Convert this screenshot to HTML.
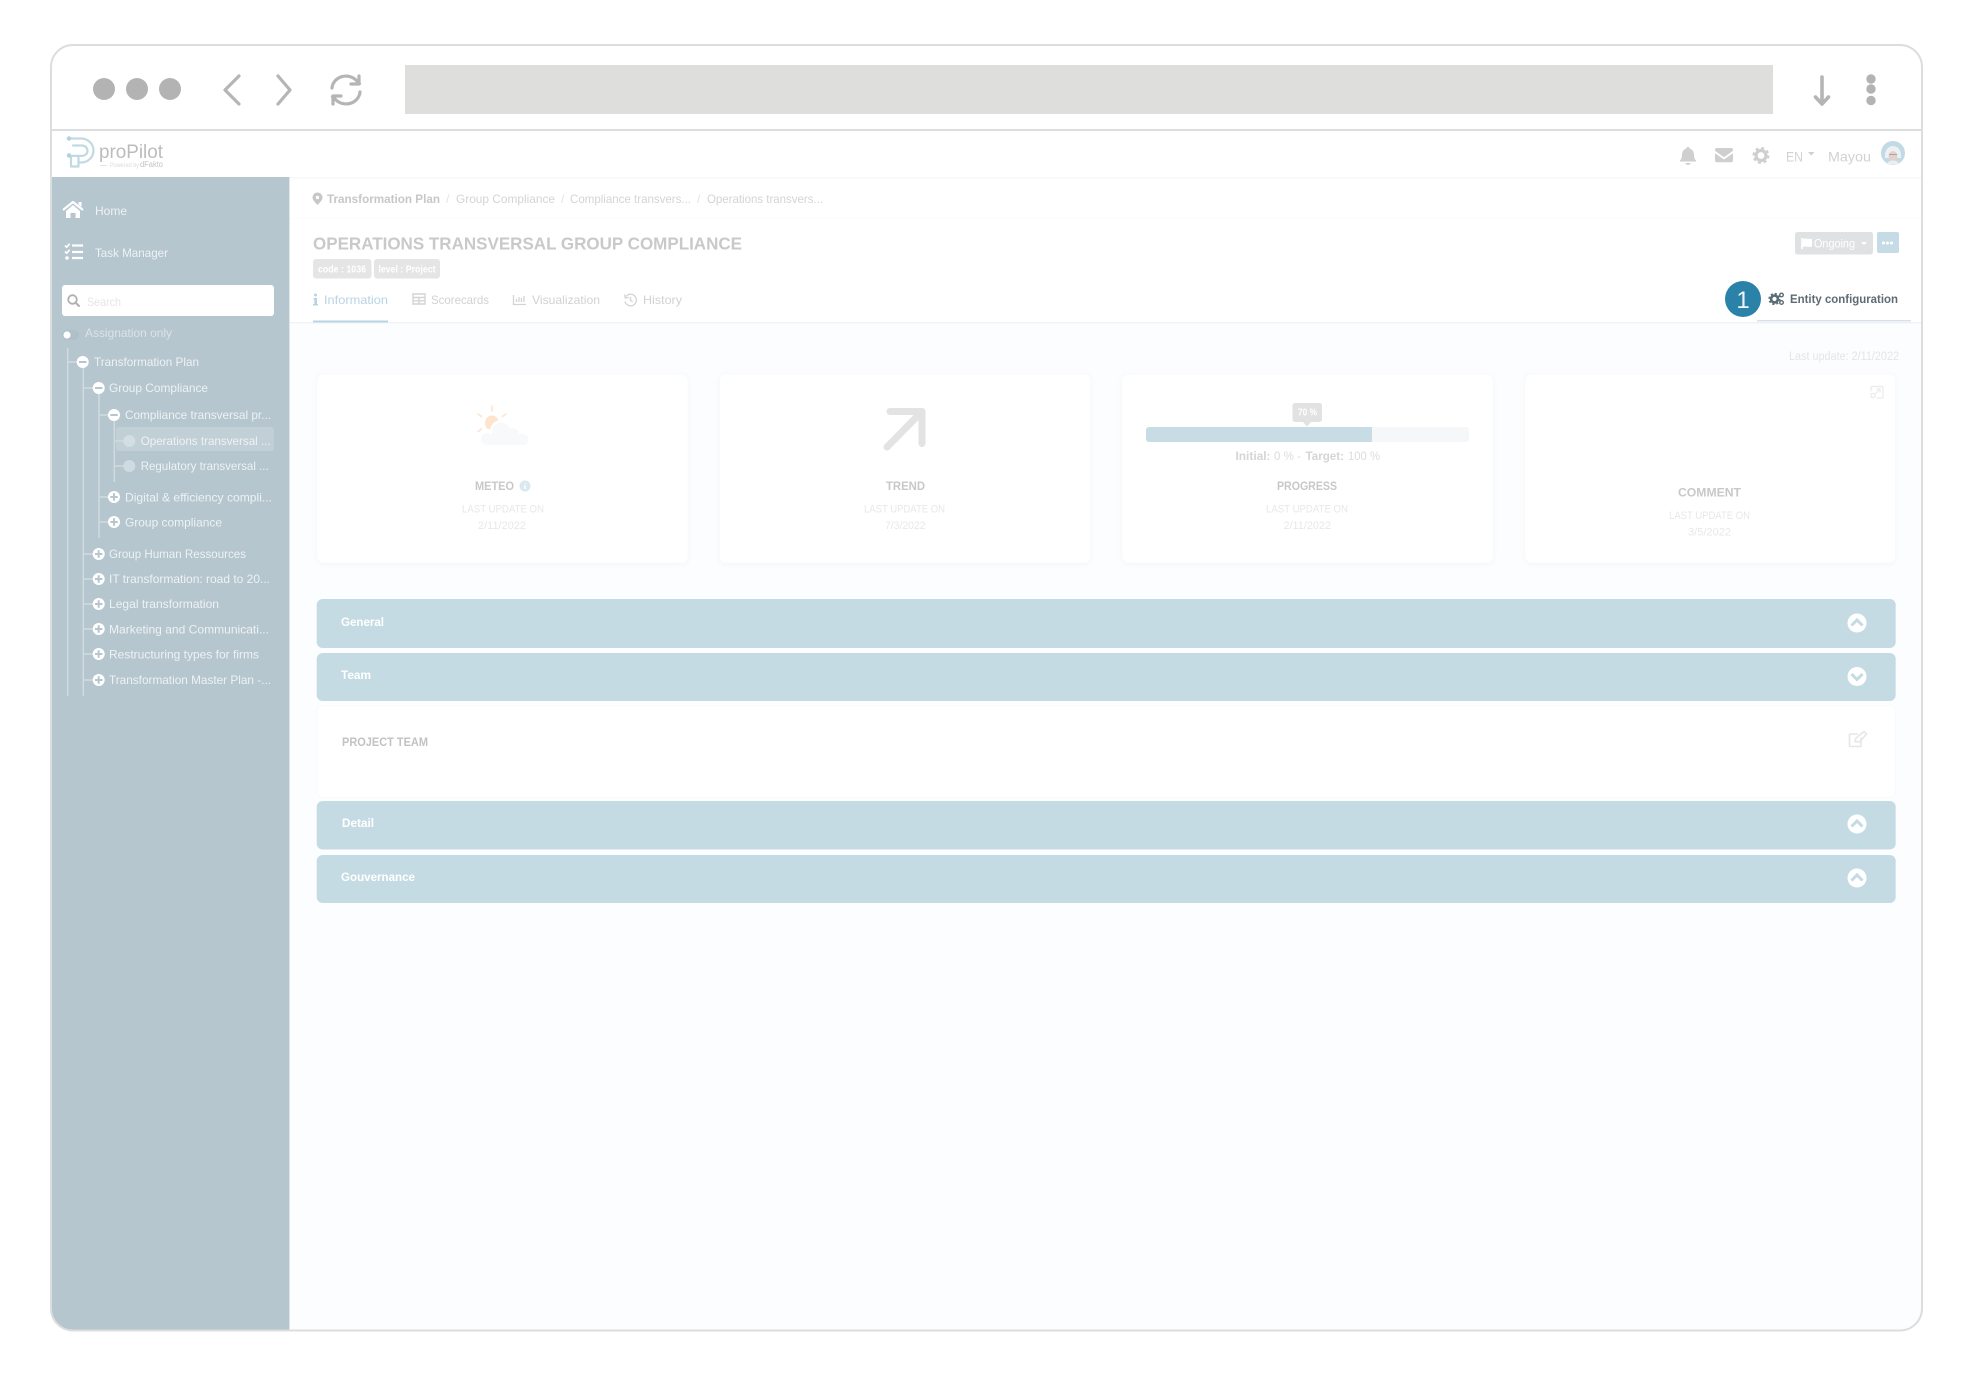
<!DOCTYPE html>
<html lang="en"><head><meta charset="utf-8"><title>proPilot</title>
<style>
html,body{margin:0;padding:0;background:#fff;width:1973px;height:1384px;overflow:hidden}
svg{display:block;filter:blur(.35px)}
text{font-family:"Liberation Sans",sans-serif;white-space:pre}
.b{font-weight:700}
.s text{fill:#eef2f4;font-size:12px}
.h{fill:#fff;font-size:12px;font-weight:700}
.l{fill:#e8e8e8;font-size:11px}
.t{fill:#c8c8c8;font-size:12px;font-weight:700}
</style></head><body>
<svg width="1973" height="1384" viewBox="0 0 1973 1384" xmlns="http://www.w3.org/2000/svg">
<defs><clipPath id="w"><rect x="51" y="45" width="1871" height="1285" rx="22"/></clipPath></defs>
<rect width="1973" height="1384" fill="#fff"/>
<g clip-path="url(#w)">
<rect x="51" y="322" width="1871" height="1010" fill="#fcfdfe"/>
<rect x="51" y="177" width="239" height="1155" fill="#b5c6ce"/>
<rect x="289" y="177" width="1" height="1155" fill="#dfe7ea"/>
</g>
<rect x="290" y="177" width="1632" height="1.5" fill="#f6f7f7"/>
<rect x="290" y="218" width="1632" height="1" fill="#fcfcfc"/>
<rect x="290" y="322" width="1632" height="1.5" fill="#eff3f5"/>
<rect x="51" y="129" width="1871" height="2" fill="#dcdddd"/>
<rect x="51" y="45" width="1871" height="1285.500" rx="22" fill="none" stroke="#dcdddd" stroke-width="2"/>

<!-- browser chrome -->
<circle cx="104" cy="89" r="11" fill="#b3b3b3"/><circle cx="137" cy="89" r="11" fill="#b3b3b3"/><circle cx="170" cy="89" r="11" fill="#b3b3b3"/>
<path d="M239 76L225 90L239 104M278 76L290 90L278 104" fill="none" stroke="#b5b5b5" stroke-width="3.2" stroke-linecap="round" stroke-linejoin="round"/>
<g fill="none" stroke="#b5b5b5" stroke-width="3.2" stroke-linecap="round" stroke-linejoin="round">
<path d="M332 88a14 13 0 0 1 24 -8l3.500 3.500M359 76v8h-8"/>
<path d="M360 92a14 13 0 0 1 -24 8l-3.500 -3.500M333 104v-8h8"/>
</g>
<rect x="405" y="65" width="1368" height="49" fill="#dededd"/>
<path d="M1822 77V104M1815.500 97L1822 104L1828.500 97" fill="none" stroke="#b5b5b5" stroke-width="3.600" stroke-linecap="round" stroke-linejoin="round"/>
<circle cx="1871" cy="79" r="4.700" fill="#b3b3b3"/><circle cx="1871" cy="89" r="4.700" fill="#b3b3b3"/><circle cx="1871" cy="100.500" r="4.700" fill="#b3b3b3"/>

<!-- logo -->
<g fill="none" stroke="#c0d9e4" stroke-width="2.200" stroke-linecap="round" stroke-linejoin="round">
<path d="M69 138.500H81a12.500 12 0 0 1 0 24H79"/>
<path d="M73 145.500H82a5.500 5.200 0 0 1 0 10.400H69"/>
<path d="M71 156V166.500H78.500V156"/>
</g>
<circle cx="69" cy="138.500" r="2.200" fill="#b2d0dd"/><circle cx="69" cy="155.500" r="2.200" fill="#b2d0dd"/>
<text x="99" y="158" font-size="19.500" fill="#bcbcbc" textLength="64" lengthAdjust="spacingAndGlyphs">proPilot</text>
<rect x="100" y="165" width="7" height="1" fill="#e2e2e2"/>
<text x="110" y="167" font-size="6" fill="#dcdcdc" textLength="29" lengthAdjust="spacingAndGlyphs">Powered by</text>
<text x="140" y="167" font-size="8" fill="#c4c4c4" textLength="23" lengthAdjust="spacingAndGlyphs">dFakto</text>

<!-- top right icons -->
<g fill="#cfcfcf">
<path d="M1688 147a1.800 1.800 0 0 1 1.800 1.800c3 .8 4.200 3.200 4.200 6.200c0 3 1 4.500 2 5.500v1H1680v-1c1 -1 2 -2.500 2 -5.500c0 -3 1.200 -5.400 4.200 -6.200a1.800 1.800 0 0 1 1.800 -1.800z"/>
<path d="M1685.500 163a2.500 2 0 0 0 5 0z"/>
<path d="M1715 150a2 2 0 0 1 2 -2h14a2 2 0 0 1 2 2v.8l-9 6.400l-9 -6.400z"/>
<path d="M1715 153.200l9 6.300l9 -6.300v7a2 2 0 0 1 -2 2h-14a2 2 0 0 1 -2 -2z"/>
<path d="M1808 152h6.500l-3.250 3.500z"/>
</g>
<circle cx="1761" cy="155.500" r="5" fill="none" stroke="#cfcfcf" stroke-width="3.200"/>
<circle cx="1761" cy="155.500" r="7.300" fill="none" stroke="#cfcfcf" stroke-width="2.400" stroke-dasharray="2.900 2.833"/>
<text x="1786" y="161.500" font-size="14" fill="#d2d2d2" textLength="17" lengthAdjust="spacingAndGlyphs">EN</text>
<text x="1828" y="161.500" font-size="14" fill="#d2d2d2" textLength="43" lengthAdjust="spacingAndGlyphs">Mayou</text>
<circle cx="1893" cy="153" r="12" fill="#c2dae5"/>
<path d="M1885 155a8 9 0 0 1 16 0v3h-16z" fill="#eef1f2"/>
<ellipse cx="1893" cy="156" rx="4.500" ry="5" fill="#e3d2cb"/>
<path d="M1887 164.500a6 4 0 0 1 12 0z" fill="#eeeeee"/>
<path d="M1889 154.500h8" stroke="#a5a5a5" stroke-width="1"/>

<!-- sidebar -->
<path d="M63 210L73 202L83 210" fill="none" stroke="#fff" stroke-width="2.200" stroke-linejoin="round"/>
<path d="M66 211L73 205L80 211V218H75.500V213H70.500V218H66zM78.500 202H81.500V207L78.500 204.500z" fill="#fff"/>
<text x="95" y="215" font-size="12" fill="#eef2f4" textLength="32" lengthAdjust="spacingAndGlyphs">Home</text>
<path d="M72 245.500H83M72 252H83M72 258H83" stroke="#fff" stroke-width="2.200"/>
<path d="M65 245.500l1.700 1.700l3 -3.400M65 251.500l1.700 1.700l3 -3.400" fill="none" stroke="#fff" stroke-width="1.600"/>
<circle cx="67" cy="258" r="1.800" fill="#fff"/>
<text x="95" y="257" font-size="12" fill="#eef2f4" textLength="73" lengthAdjust="spacingAndGlyphs">Task Manager</text>
<rect x="62" y="285" width="212" height="31" rx="3" fill="#fff"/>
<circle cx="72.500" cy="299.500" r="4.300" fill="none" stroke="#b0b0b0" stroke-width="1.800"/>
<path d="M75.500 302.500L79 306" stroke="#b0b0b0" stroke-width="2" stroke-linecap="round"/>
<text x="87" y="306" font-size="12" fill="#e6e6e6" textLength="34" lengthAdjust="spacingAndGlyphs">Search</text>
<rect x="62" y="330" width="17" height="10" rx="5" fill="#afc0c8"/>
<circle cx="67" cy="335" r="3.600" fill="#fff"/>
<text x="85" y="337" font-size="12" fill="#dbe4e8" textLength="87" lengthAdjust="spacingAndGlyphs">Assignation only</text>

<g fill="none" stroke="#d0dbe0" stroke-width="1.500">
<path d="M67.700 348V696M68 362H83"/>
<path d="M83.300 362V696M83 388H99M83 554H99M83 579H99M83 604H99M83 629H99M83 654H99M83 680H99"/>
<path d="M99 388V538M99 415H114M99 497H114M99 522H114"/>
<path d="M114.300 415V482M114 441H129M114 466H129"/>
</g>
<rect x="116" y="427" width="158" height="24" rx="3" fill="#c1cfd6"/>
<path d="M116 441H129" stroke="#d0dbe0" stroke-width="1.500"/>
<g fill="#fff">
<circle cx="82.700" cy="362" r="6"/><circle cx="98.700" cy="388" r="6"/><circle cx="114" cy="415" r="6"/>
<circle cx="114" cy="497" r="6"/><circle cx="114" cy="522" r="6"/>
<circle cx="98.700" cy="554" r="6"/><circle cx="98.700" cy="579" r="6"/><circle cx="98.700" cy="604" r="6"/><circle cx="98.700" cy="629" r="6"/><circle cx="98.700" cy="654" r="6"/><circle cx="98.700" cy="680" r="6"/>
</g>
<circle cx="129.300" cy="441" r="6" fill="#d3dee3"/><circle cx="129.300" cy="466" r="6" fill="#cfdbe1"/>
<path d="M79 362h7.400M95 388h7.400M110.300 415h7.400M110.300 497h7.400M114 493.300v7.400M110.300 522h7.400M114 518.300v7.400M95 554h7.400M98.700 550.300v7.400M95 579h7.400M98.700 575.300v7.400M95 604h7.400M98.700 600.300v7.400M95 629h7.400M98.700 625.300v7.400M95 654h7.400M98.700 650.300v7.400M95 680h7.400M98.700 676.300v7.400" stroke="#b5c6ce" stroke-width="2"/>
<g class="s">
<text x="94" y="366" textLength="105" lengthAdjust="spacingAndGlyphs">Transformation Plan</text>
<text x="109" y="392" textLength="99" lengthAdjust="spacingAndGlyphs">Group Compliance</text>
<text x="125" y="419" textLength="146" lengthAdjust="spacingAndGlyphs">Compliance transversal pr...</text>
<text x="140.700" y="445" textLength="130" lengthAdjust="spacingAndGlyphs">Operations transversal ...</text>
<text x="140.700" y="470" textLength="128" lengthAdjust="spacingAndGlyphs">Regulatory transversal ...</text>
<text x="125" y="501.500" textLength="147" lengthAdjust="spacingAndGlyphs">Digital &amp; efficiency compli...</text>
<text x="125" y="526.500" textLength="97" lengthAdjust="spacingAndGlyphs">Group compliance</text>
<text x="109" y="558" textLength="137" lengthAdjust="spacingAndGlyphs">Group Human Ressources</text>
<text x="109" y="583" textLength="161" lengthAdjust="spacingAndGlyphs">IT transformation: road to 20...</text>
<text x="109" y="608" textLength="110" lengthAdjust="spacingAndGlyphs">Legal transformation</text>
<text x="109" y="633.500" textLength="160" lengthAdjust="spacingAndGlyphs">Marketing and Communicati...</text>
<text x="109" y="658.500" textLength="150" lengthAdjust="spacingAndGlyphs">Restructuring types for firms</text>
<text x="109" y="684" textLength="162" lengthAdjust="spacingAndGlyphs">Transformation Master Plan -...</text>
</g>

<!-- breadcrumb -->
<path fill-rule="evenodd" d="M317.500 192.500a5 5 0 0 1 5 5c0 2.700 -3 5.200 -5 7.500c-2 -2.300 -5 -4.800 -5 -7.500a5 5 0 0 1 5 -5zM317.500 195.800a1.700 1.700 0 1 0 0 3.400a1.700 1.700 0 0 0 0 -3.400z" fill="#c7c7c7"/>
<text x="327" y="203" class="b" font-size="12" fill="#c7c7c7" textLength="113" lengthAdjust="spacingAndGlyphs">Transformation Plan</text>
<text x="446" y="203" font-size="12" fill="#e2e2e2">/</text>
<text x="456" y="203" font-size="12" fill="#d4d4d4" textLength="99" lengthAdjust="spacingAndGlyphs">Group Compliance</text>
<text x="561" y="203" font-size="12" fill="#e2e2e2">/</text>
<text x="570" y="203" font-size="12" fill="#d4d4d4" textLength="121" lengthAdjust="spacingAndGlyphs">Compliance transvers...</text>
<text x="697" y="203" font-size="12" fill="#e2e2e2">/</text>
<text x="707" y="203" font-size="12" fill="#d4d4d4" textLength="116" lengthAdjust="spacingAndGlyphs">Operations transvers...</text>

<!-- title -->
<text x="313" y="249.500" class="b" font-size="17.500" fill="#c9c9c9" textLength="429" lengthAdjust="spacingAndGlyphs">OPERATIONS TRANSVERSAL GROUP COMPLIANCE</text>
<rect x="313" y="259" width="58.500" height="19.500" rx="3" fill="#e5e5e5"/>
<text x="318" y="272.500" class="b" font-size="10" fill="#fff" textLength="48" lengthAdjust="spacingAndGlyphs">code : 1036</text>
<rect x="374" y="259" width="66" height="19.500" rx="3" fill="#e5e5e5"/>
<text x="378.500" y="272.500" class="b" font-size="10" fill="#fff" textLength="57" lengthAdjust="spacingAndGlyphs">level : Project</text>

<!-- status buttons -->
<rect x="1795" y="232" width="78" height="22.500" rx="2.500" fill="#dfe2e3"/>
<path d="M1802 238V249" stroke="#fff" stroke-width="1.800"/>
<path d="M1803 239c3 -1.500 5 1 9 -.5v8c-4 1.500 -6 -1 -9 .5z" fill="#fff"/>
<text x="1814" y="247.500" font-size="12" fill="#fff" textLength="41" lengthAdjust="spacingAndGlyphs">Ongoing</text>
<path d="M1861 242h6l-3 3z" fill="#fff"/>
<rect x="1877" y="232" width="22" height="21" rx="2" fill="#c5dbe5"/>
<circle cx="1883.500" cy="243" r="1.500" fill="#fff"/><circle cx="1887.500" cy="243" r="1.500" fill="#fff"/><circle cx="1891.500" cy="243" r="1.500" fill="#fff"/>

<!-- tabs -->
<circle cx="315.500" cy="295" r="1.500" fill="#b8d4e3"/>
<path d="M313.500 298h3.500v6h1v1.500h-5v-1.500h1.300v-4.500h-.8z" fill="#b8d4e3"/>
<text x="324" y="304" font-size="12" fill="#b8d4e3" textLength="64" lengthAdjust="spacingAndGlyphs">Information</text>
<rect x="313" y="320.500" width="75" height="2" fill="#b8d5e4"/>
<path d="M413 294h12v10h-12zM413 297.500h12M419 297.500v6.500M413 300.800h12" fill="none" stroke="#d4d4d4" stroke-width="1.400"/>
<text x="431" y="304" font-size="12" fill="#d2d2d2" textLength="58" lengthAdjust="spacingAndGlyphs">Scorecards</text>
<path d="M513.500 295v9.500H526M516.500 302v-3M519 302v-5M521.500 302v-4M524 302v-6" fill="none" stroke="#d4d4d4" stroke-width="1.300"/>
<text x="532" y="304" font-size="12" fill="#d2d2d2" textLength="68" lengthAdjust="spacingAndGlyphs">Visualization</text>
<path d="M626 296.500a5.800 5.800 0 1 1 -1 5M624.500 294.500l.8 3.500l3.500 -.5M630.500 297v3.500l2.200 1.200" fill="none" stroke="#d4d4d4" stroke-width="1.300"/>
<text x="643" y="304" font-size="12" fill="#d2d2d2" textLength="39" lengthAdjust="spacingAndGlyphs">History</text>

<!-- entity config -->
<rect x="1757" y="320" width="154" height="1.500" fill="#d9e2e8"/>
<circle cx="1743" cy="299" r="18" fill="#2a82a8"/>
<text x="1743" y="308" font-size="24" fill="#eef5f8" text-anchor="middle">1</text>
<circle cx="1774.500" cy="299" r="3.400" fill="none" stroke="#5d6b75" stroke-width="2.600"/>
<circle cx="1774.500" cy="299" r="5.200" fill="none" stroke="#5d6b75" stroke-width="1.800" stroke-dasharray="2.100 2"/>
<circle cx="1781.500" cy="295" r="1.800" fill="none" stroke="#5d6b75" stroke-width="1.400"/>
<circle cx="1781.500" cy="302.500" r="1.800" fill="none" stroke="#5d6b75" stroke-width="1.400"/>
<text x="1790" y="303" class="b" font-size="12" fill="#5d6b75" textLength="108" lengthAdjust="spacingAndGlyphs">Entity configuration</text>

<text x="1789" y="360" font-size="11.500" fill="#e4e6e6" textLength="110" lengthAdjust="spacingAndGlyphs">Last update: 2/11/2022</text>

<!-- cards -->
<g fill="#fff" stroke="#f9fbfb" stroke-width="1" style="filter:drop-shadow(0 1px 2px rgba(190,200,205,.14))">
<rect x="317" y="374" width="371" height="189" rx="6"/>
<rect x="719.500" y="374" width="371" height="189" rx="6"/>
<rect x="1122" y="374" width="371" height="189" rx="6"/>
<rect x="1525" y="374" width="370.500" height="189" rx="6"/>
</g>
<!-- weather -->
<path d="M492 406v5M478 414l3.500 2.500M506 414l-3.500 2.500M478 431.500l3.500 -2.500" stroke="#fde8d6" stroke-width="1.800" stroke-linecap="round"/>
<ellipse cx="492" cy="423" rx="7" ry="7.500" fill="#fde4cd"/>
<g fill="#fff"><circle cx="488" cy="438" r="9"/><circle cx="501" cy="431" r="11"/><circle cx="512" cy="434" r="9"/></g>
<g fill="#f7f9fa"><circle cx="487" cy="439" r="6"/><circle cx="501" cy="431.500" r="9"/><circle cx="512" cy="435" r="7"/><circle cx="523" cy="439.500" r="5.500"/><rect x="487" y="434" width="36" height="11"/></g>
<text x="475" y="490" class="t" textLength="39" lengthAdjust="spacingAndGlyphs">METEO</text>
<circle cx="525" cy="486" r="5.500" fill="#dbe8f0"/><path d="M525 483.500v.8M525 485.500v3.500" stroke="#fff" stroke-width="1.500"/>
<text x="462" y="512.500" class="l" textLength="82" lengthAdjust="spacingAndGlyphs">LAST UPDATE ON</text>
<text x="478" y="529" class="l" textLength="48" lengthAdjust="spacingAndGlyphs">2/11/2022</text>
<!-- trend -->
<path d="M890 411.500H922V443.500M922 411.500L887 447" fill="none" stroke="#e3e3e3" stroke-width="7" stroke-linecap="round" stroke-linejoin="round"/>
<text x="886" y="490" class="t" textLength="39" lengthAdjust="spacingAndGlyphs">TREND</text>
<text x="864" y="512.500" class="l" textLength="81" lengthAdjust="spacingAndGlyphs">LAST UPDATE ON</text>
<text x="885" y="529" class="l" textLength="40.500" lengthAdjust="spacingAndGlyphs">7/3/2022</text>
<!-- progress -->
<rect x="1146" y="427" width="323" height="15" rx="3" fill="#f5f7f8"/>
<path d="M1149 427H1372V442H1149a3 3 0 0 1 -3 -3V430a3 3 0 0 1 3 -3z" fill="#c8dce5"/>
<rect x="1292.500" y="403" width="29.500" height="19" rx="2.500" fill="#e2e2e2"/>
<path d="M1303 422h8l-4 4.500z" fill="#e2e2e2"/>
<text x="1298" y="415.500" class="b" font-size="10" fill="#fff" textLength="19" lengthAdjust="spacingAndGlyphs">70 %</text>
<text x="1235.500" y="460" class="b" font-size="12" fill="#d5d5d5" textLength="35" lengthAdjust="spacingAndGlyphs">Initial:</text>
<text x="1274" y="460" font-size="12" fill="#dcdcdc" textLength="27" lengthAdjust="spacingAndGlyphs">0 % -</text>
<text x="1305.500" y="460" class="b" font-size="12" fill="#d5d5d5" textLength="38.500" lengthAdjust="spacingAndGlyphs">Target:</text>
<text x="1348" y="460" font-size="12" fill="#dcdcdc" textLength="32" lengthAdjust="spacingAndGlyphs">100 %</text>
<text x="1277" y="490" class="t" textLength="60" lengthAdjust="spacingAndGlyphs">PROGRESS</text>
<text x="1266" y="512.500" class="l" textLength="82" lengthAdjust="spacingAndGlyphs">LAST UPDATE ON</text>
<text x="1283.500" y="529" class="l" textLength="47.500" lengthAdjust="spacingAndGlyphs">2/11/2022</text>
<!-- comment -->
<path d="M1871 391.500V387.500a1 1 0 0 1 1 -1h10a1 1 0 0 1 1 1v9.500a1 1 0 0 1 -1 1H1877M1875.500 393.500l4.500 -4.500M1876.500 389h3.500v3.500" fill="none" stroke="#ebebeb" stroke-width="1.200"/>
<rect x="1871" y="393.500" width="4" height="4" rx="1" fill="none" stroke="#ebebeb" stroke-width="1.200"/>
<text x="1678" y="496.500" class="t" textLength="63" lengthAdjust="spacingAndGlyphs">COMMENT</text>
<text x="1669" y="519" class="l" textLength="81" lengthAdjust="spacingAndGlyphs">LAST UPDATE ON</text>
<text x="1688" y="535.500" class="l" textLength="43" lengthAdjust="spacingAndGlyphs">3/5/2022</text>

<!-- accordions -->
<g fill="#c5dbe4">
<rect x="316.700" y="599" width="1579" height="49" rx="6"/>
<rect x="316.700" y="653" width="1579" height="48" rx="6"/>
<rect x="316.700" y="801" width="1579" height="48.500" rx="6"/>
<rect x="316.700" y="855" width="1579" height="48" rx="6"/>
</g>
<rect x="317" y="705.500" width="1578.500" height="92" rx="6" fill="#fff" stroke="#f8f9f9"/>
<text x="341" y="626" class="h" textLength="43" lengthAdjust="spacingAndGlyphs">General</text>
<text x="341" y="679" class="h" textLength="30" lengthAdjust="spacingAndGlyphs">Team</text>
<text x="342" y="746" class="b" font-size="12" fill="#c2c2c2" textLength="86" lengthAdjust="spacingAndGlyphs">PROJECT TEAM</text>
<text x="342" y="827" class="h" textLength="32" lengthAdjust="spacingAndGlyphs">Detail</text>
<text x="341" y="881" class="h" textLength="74" lengthAdjust="spacingAndGlyphs">Gouvernance</text>
<g fill="#fff"><circle cx="1857" cy="623" r="9.500"/><circle cx="1857" cy="676.500" r="9.500"/><circle cx="1857" cy="824" r="9.500"/><circle cx="1857" cy="878" r="9.500"/></g>
<path d="M1851.500 625.500L1857 620L1862.500 625.500M1851.500 674L1857 679.500L1862.500 674M1851.500 826.500L1857 821L1862.500 826.500M1851.500 880.500L1857 875L1862.500 880.500" fill="none" stroke="#c5dbe4" stroke-width="3"/>
<path d="M1861 737.500V745.500a1 1 0 0 1 -1 1H1850.500a1 1 0 0 1 -1 -1V735a1 1 0 0 1 1 -1H1858M1855 741.500l1 -3.500l8 -6.500l2.500 2.500l-7 8z" fill="none" stroke="#e5e5e5" stroke-width="1.500"/>
</svg>
</body></html>
